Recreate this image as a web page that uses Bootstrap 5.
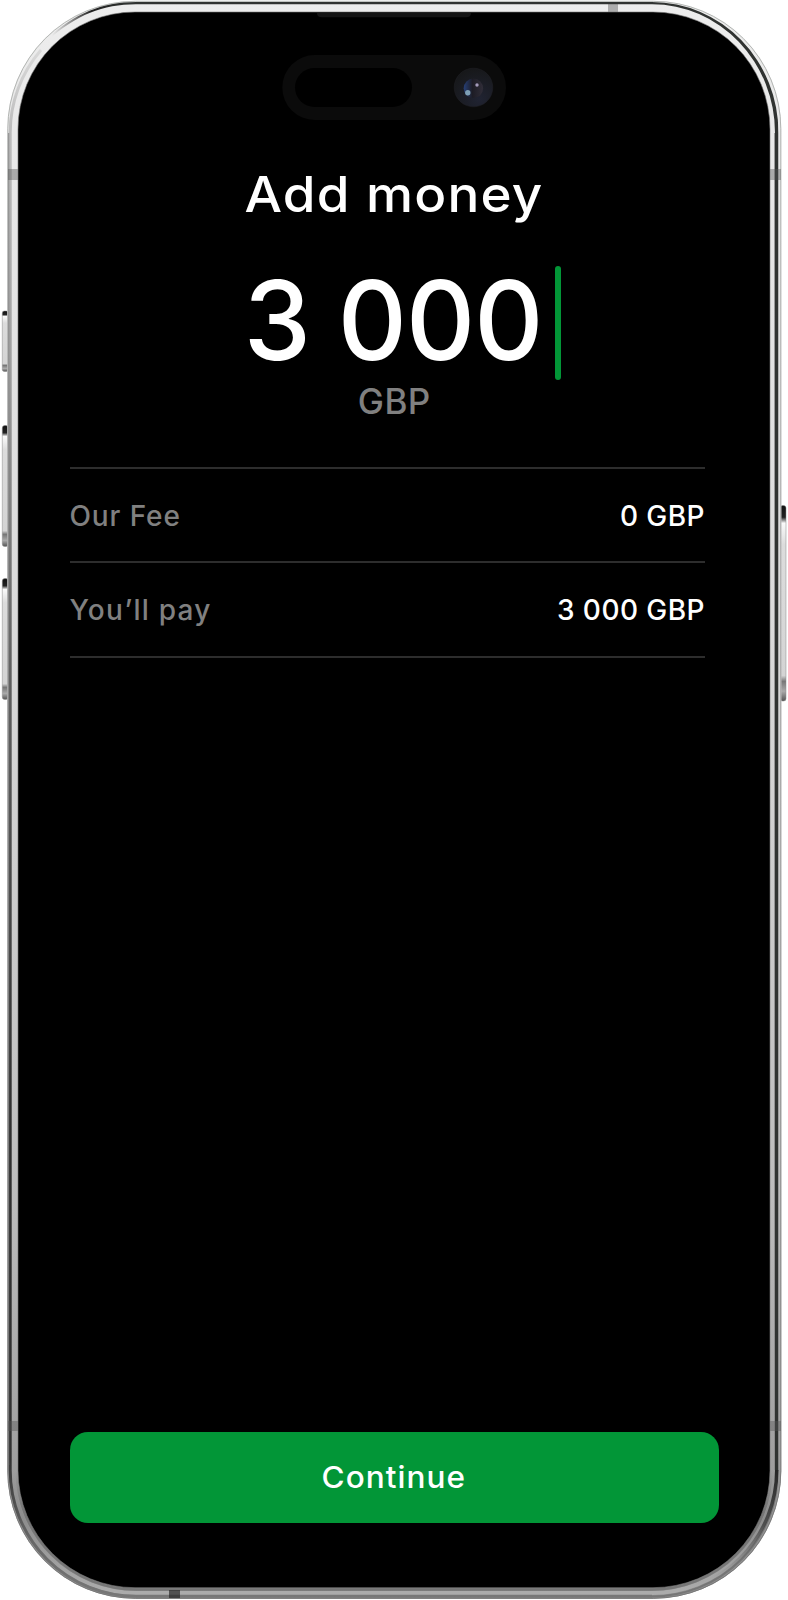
<!DOCTYPE html>
<html lang="en">
<head>
<meta charset="utf-8">
<meta name="viewport" content="width=device-width, initial-scale=1">
<title>Add money</title>
<link href="https://cdn.jsdelivr.net/npm/bootstrap@5.3.0/dist/css/bootstrap.min.css" rel="stylesheet">
<style>
  body { background: #fff; font-family: Inter, "Open Sans", sans-serif; font-weight: 500; }
  .phone { width: 788px; height: 1600px; padding: 162px 69px 77px 69.5px; overflow: hidden; }
  .phone-frame { left: 0; top: 0; z-index: 0; }
  .phone-screen { z-index: 1; color: #fff; }
  .screen-title { font-size: 50px; line-height: 60px; letter-spacing: 1.1px; font-weight: 500; margin: 2px 0 41px; }
  .screen-title span { display: inline-block; transform: scaleX(1.06); }
  .amount { font-size: 110px; line-height: 110px; letter-spacing: -1px; }
  .amount span { display: inline-block; transform: scaleX(.975); margin-right: 1.5px; }
  .caret { left: 485.5px; top: 1px; width: 6px; height: 114px; border-radius: 3px; background: #029637; }
  .currency { font-size: 35px; line-height: 40px; letter-spacing: .4px; color: #808080; margin-top: 6px; }
  .fees { width: 635.5px; margin-top: 46px; border-top: 2px solid #2d2d2d; font-size: 28px; }
  .fee-line { height: 94.4px; padding-top: 1.5px; border-bottom: 2px solid #2d2d2d; letter-spacing: .45px; }
  .fee-label { color: #808080; letter-spacing: .9px; }
  .pay-label { letter-spacing: 1.25px; }
  .btn-continue { height: 91px; border: 0; border-radius: 18px; background: #029637; color: #fff; font-size: 30px; font-weight: 500; letter-spacing: 1px; }
  .btn-continue span { display: inline-block; transform: scaleX(1.05); }
</style>
</head>
<body>
<main class="phone position-relative d-flex flex-column">
  <svg class="phone-frame position-absolute" width="788" height="1600" viewBox="0 0 788 1600" aria-hidden="true">
    <defs>
      <linearGradient id="metal" x1="0" y1="0" x2="0" y2="1">
        <stop offset="0" stop-color="#ededed"/><stop offset=".4" stop-color="#dadada"/><stop offset=".75" stop-color="#bdbdbd"/><stop offset=".9" stop-color="#a2a2a2"/><stop offset="1" stop-color="#8c8c8c"/>
      </linearGradient>
      <linearGradient id="leftEdge" gradientUnits="userSpaceOnUse" x1="0" y1="40" x2="0" y2="1600">
        <stop offset="0" stop-color="#ddd"/><stop offset=".06" stop-color="#bbb"/><stop offset=".2" stop-color="#a0a0a0"/><stop offset=".4" stop-color="#606060"/><stop offset=".7" stop-color="#303030"/><stop offset=".91" stop-color="#333"/><stop offset=".96" stop-color="#666"/><stop offset="1" stop-color="#787878"/>
      </linearGradient>
      <linearGradient id="rim" x1="0" y1="0" x2="0" y2="1">
        <stop offset="0" stop-color="#b5b8b5"/><stop offset=".3" stop-color="#a5a5a5"/><stop offset="1" stop-color="#777"/>
      </linearGradient>
      <linearGradient id="topDark" gradientUnits="userSpaceOnUse" x1="52" y1="0" x2="130" y2="0">
        <stop offset="0" stop-color="#333" stop-opacity="0"/><stop offset=".5" stop-color="#222"/><stop offset="1" stop-color="#303331"/>
      </linearGradient>
      <linearGradient id="rightDark" gradientUnits="userSpaceOnUse" x1="0" y1="1470" x2="0" y2="1580">
        <stop offset="0" stop-color="#252525"/><stop offset=".5" stop-color="#444" stop-opacity=".85"/><stop offset="1" stop-color="#777" stop-opacity="0"/>
      </linearGradient>
      <linearGradient id="shade" gradientUnits="userSpaceOnUse" x1="0" y1="1470" x2="0" y2="1550">
        <stop offset="0" stop-color="#767676" stop-opacity="0"/><stop offset=".5" stop-color="#767676"/><stop offset="1" stop-color="#767676"/>
      </linearGradient>
      <linearGradient id="shine" gradientUnits="userSpaceOnUse" x1="0" y1="1470" x2="0" y2="1590">
        <stop offset="0" stop-color="#8d8d8d" stop-opacity="0"/><stop offset=".4" stop-color="#8d8d8d"/><stop offset="1" stop-color="#ababab"/>
      </linearGradient>
      <linearGradient id="button" x1="0" y1="0" x2="0" y2="1">
        <stop offset="0" stop-color="#111"/><stop offset=".06" stop-color="#222"/><stop offset=".09" stop-color="#fafafa"/><stop offset=".2" stop-color="#dcdcdc"/><stop offset=".87" stop-color="#d4d4d4"/><stop offset=".9" stop-color="#777"/><stop offset=".95" stop-color="#aaa"/><stop offset="1" stop-color="#555"/>
      </linearGradient>
      <radialGradient id="camera" cx=".65" cy=".8" r=".8"><stop offset="0" stop-color="#202332"/><stop offset="1" stop-color="#17181a"/></radialGradient>
      <linearGradient id="lens"><stop offset="0" stop-color="#263f76"/><stop offset=".45" stop-color="#1d1c25"/><stop offset="1" stop-color="#302d38"/></linearGradient>
    </defs>
    <g fill="url(#button)" stroke="#888" stroke-width=".5">
      <rect x="2.3" y="311" width="6" height="60.500" rx="2"/>
      <rect x="2.3" y="425.500" width="6" height="121" rx="2.500"/>
      <rect x="2.3" y="578.500" width="6" height="121" rx="2.500"/>
      <rect x="780" y="505.500" width="6" height="195.500" rx="2.500"/>
    </g>
    <rect x="7.300" y=".8" width="774" height="1598" rx="128" fill="url(#metal)"/>
    <rect x="7.800" y="1.300" width="773" height="1597" rx="127.500" fill="none" stroke="url(#rim)"/>
    <!-- polished chamfers around the bottom -->
    <path d="M13 1470A123 123 0 0 0 136 1593H652A123 123 0 0 0 775 1470" fill="none" stroke="url(#shine)" stroke-width="4"/>
    <path d="M16.500 1470A119.500 119.500 0 0 0 136 1589.500H652A119.500 119.500 0 0 0 771.500 1470" fill="none" stroke="url(#shade)" stroke-width="2.400"/>
    <path d="M652 1596.500A126.500 126.500 0 0 0 778.500 1470" fill="none" stroke="url(#shade)" stroke-width="2"/>
    <!-- left edge, from the top corner round to the bottom side -->
    <path d="M41 50A126 126 0 0 0 10.200 133V1470A125.800 126 0 0 0 136 1596.200H652" fill="none" stroke="url(#leftEdge)" stroke-width="3"/>
    <path d="M8.700 1465V133" fill="none" stroke="#777" stroke-width=".8"/>
    <!-- dark band over the top and down the right side -->
    <path d="M48 38C74 14 102 2 136 2H652A126.500 131 0 0 1 778.500 133V1470A126.500 126.500 0 0 1 652 1596.500V1593A123 123 0 0 0 775 1470V133A123 128.800 0 0 0 652 4.200H136C103 4.200 76 15 48 40z" fill="url(#topDark)" clip-path="inset(0 0 126px 0)"/>
    <path d="M776.750 1470A124.750 124.750 0 0 1 652 1594.750" fill="none" stroke="url(#rightDark)" stroke-width="3.500"/>
    <path d="M774.500 133V1470" stroke="#888" stroke-width=".8"/>
    <g fill="#555" fill-opacity=".42">
      <path d="M608 4h10v8h-10zM8 169h10v11H8zM770 169h11v11h-11zM8 1421h10v10H8zM770 1421h11v10h-11z"/>
      <path d="M169 1590h11v8h-11z" fill="#222" fill-opacity=".65"/>
    </g>
    <rect x="18" y="12" width="752" height="1575.700" rx="117" fill="#000" stroke="#777" stroke-width=".6"/>
    <path d="M317 13h154q0 4.300-5 4.300H322q-5 0-5-4.300z" fill="#151515"/>
    <rect x="282.300" y="55" width="223.700" height="65" rx="32.500" fill="#0b0b0b"/>
    <rect x="295" y="68" width="117" height="39" rx="19.500" fill="#000"/>
    <circle cx="473.500" cy="87.500" r="19.300" fill="url(#camera)" stroke="#202126" stroke-width=".5"/>
    <circle cx="473.400" cy="88.300" r="9.700" fill="url(#lens)"/>
    <circle cx="467.800" cy="92.800" r="2.700" fill="#7e9fb5"/>
    <circle cx="477" cy="85" r="1.700" fill="#a49bba"/>
  </svg>

  <section class="phone-screen position-relative d-flex flex-column flex-grow-1">
    <h1 class="screen-title text-center"><span>Add money</span></h1>
    <div class="amount position-relative text-center"><span>3 000</span><i class="caret position-absolute"></i></div>
    <div class="currency text-center">GBP</div>
    <div class="fees">
      <div class="fee-line d-flex align-items-center justify-content-between"><span class="fee-label">Our Fee</span><span>0 GBP</span></div>
      <div class="fee-line d-flex align-items-center justify-content-between"><span class="fee-label pay-label">You’ll pay</span><span>3 000 GBP</span></div>
    </div>
    <button class="btn btn-continue w-100 mt-auto p-0" type="button"><span>Continue</span></button>
  </section>
</main>
<script src="https://cdn.jsdelivr.net/npm/bootstrap@5.3.0/dist/js/bootstrap.bundle.min.js"></script>
</body>
</html>
